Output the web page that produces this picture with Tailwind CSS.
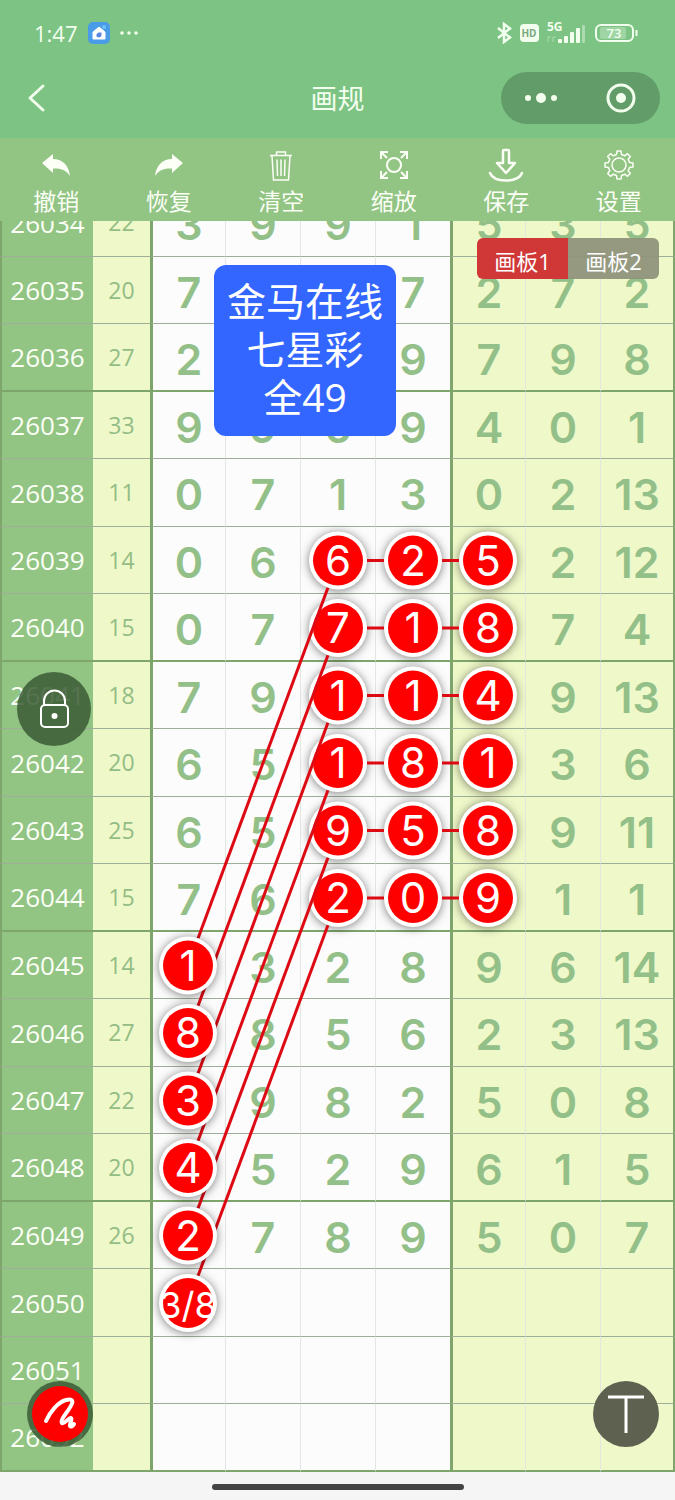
<!DOCTYPE html>
<html lang="zh-CN">
<head>
    <meta charset="UTF-8">
    <meta name="viewport" content="width=device-width, initial-scale=1.0">
    <title>画规</title>
    <script src="https://cdn.jsdelivr.net/npm/@tailwindcss/browser@4"></script>
</head>
<body class="min-h-screen bg-[#f5f5f5] font-['Open_Sans','Noto_Sans_CJK_SC',sans-serif]">
    <header class="bg-[#7cc384] text-[#f3ffee] pb-2">
        <!-- Status bar -->
        <div class="h-[66px] flex items-center justify-between pl-[34px] pr-[37px]">
            <div class="flex items-center gap-2.5">
                <span class="text-[22px] leading-none font-medium">1:47</span>
                <svg class="w-[22px] h-[22px]" viewBox="0 0 22 22">
                    <rect width="22" height="22" rx="5" fill="#4a9be8"/>
                    <path d="M5 10 L11 5 L17 10 V17 H5 Z" fill="#fff" stroke="#fff" stroke-width="1" stroke-linejoin="round"/>
                    <path d="M8.500 14.500 a3 3 0 0 1 3-4 h2 v2 a3 3 0 0 1-3 3z" fill="#5a86e0"/>
                    <circle cx="16" cy="5" r="2" fill="#6ec0f5"/>
                </svg>
                <svg class="w-[18px] h-1" viewBox="0 0 18 4" fill="currentColor">
                    <circle cx="2" cy="2" r="1.800"/><circle cx="9" cy="2" r="1.800"/><circle cx="16" cy="2" r="1.800"/>
                </svg>
            </div>
            <div class="flex items-center gap-2">
                <svg class="w-4 h-[22px]" viewBox="0 0 16 22" fill="none" stroke="currentColor" stroke-width="2.500">
                    <path d="M2 6 L14 15.500 L8 20 V2 L14 6.500 L2 16"/>
                </svg>
                <svg class="w-[19px] h-[18px]" viewBox="0 0 19 18">
                    <rect width="19" height="18" rx="4" fill="#f3ffee"/>
                    <text x="9" y="13" text-anchor="middle" font-size="10" font-weight="700" fill="#7ca881">HD</text>
                </svg>
                <svg class="w-[40px] h-[22px] overflow-visible" viewBox="0 0 40 22" fill="currentColor">
                    <text x="0" y="9" font-size="12" font-weight="700">5G</text>
                    <path d="M1 20 v-5 h3 M6 20 v-5 h3" fill="none" stroke="currentColor" opacity=".4"/>
                    <rect x="11" y="17" width="4" height="4" rx="1"/>
                    <rect x="17" y="14" width="4" height="7" rx="1"/>
                    <rect x="23" y="10" width="4" height="11" rx="1"/>
                    <rect x="29" y="6" width="4" height="15" rx="1"/>
                    <rect x="35" y="3" width="3" height="18" rx="1" opacity=".4"/>
                </svg>
                <svg class="w-[43px] h-[18px]" viewBox="0 0 43 18" fill="none" stroke="currentColor" stroke-width="2">
                    <rect x="5" y="3" width="26" height="12" rx="2" fill="currentColor" stroke="none" opacity=".3"/>
                    <rect x="1" y="1" width="37" height="16" rx="5"/>
                    <path d="M41.500 6 v6"/>
                    <text x="19" y="14" text-anchor="middle" font-size="13" font-weight="600" fill="currentColor" stroke="none">73</text>
                </svg>
            </div>
        </div>
        <!-- Title bar -->
        <div class="h-16 grid grid-cols-3 items-center px-[15px]">
            <button aria-label="返回" class="w-6 h-8 ml-2">
                <svg class="w-6 h-8" viewBox="0 0 24 32" fill="none" stroke="currentColor" stroke-width="3" stroke-linecap="round" stroke-linejoin="round">
                    <path d="M20 4 L7 16 L20 28"/>
                </svg>
            </button>
            <h1 class="text-center text-[27px] leading-none">画规</h1>
            <div class="justify-self-end w-[159px] h-[52px] rounded-full bg-[#629d69] flex items-center justify-between px-6">
                <button aria-label="更多">
                    <svg class="w-8 h-3" viewBox="0 0 32 12" fill="currentColor">
                        <circle cx="3" cy="6" r="3"/><circle cx="16" cy="6" r="5"/><circle cx="29" cy="6" r="3"/>
                    </svg>
                </button>
                <button aria-label="关闭">
                    <svg class="w-[30px] h-[30px]" viewBox="0 0 30 30">
                        <circle cx="15" cy="15" r="13" fill="none" stroke="currentColor" stroke-width="3"/>
                        <circle cx="15" cy="15" r="5" fill="currentColor"/>
                    </svg>
                </button>
            </div>
        </div>
    </header>

    <nav class="relative z-10 h-[83px] grid grid-cols-6 bg-[#92c484] text-[#fbfff5] text-[23px] leading-none">
        <button class="flex flex-col items-center gap-2 pt-2">
            <svg class="w-9 h-9" viewBox="0 0 36 36" fill="currentColor">
                <path d="M4 17 L15 8 V13 C25 13 31 20 32 30 C28 24 23 22 15 22.500 V27 Z"/>
            </svg>
            撤销
        </button>
        <button class="flex flex-col items-center gap-2 pt-2">
            <svg class="w-9 h-9" viewBox="0 0 36 36" fill="currentColor">
                <path d="M32 17 L21 8 V13 C11 13 5 20 4 30 C8 24 13 22 21 22.500 V27 Z"/>
            </svg>
            恢复
        </button>
        <button class="flex flex-col items-center gap-2 pt-2">
            <svg class="w-9 h-9" viewBox="0 0 36 36" fill="none" stroke="currentColor" stroke-width="1.500">
                <path d="M7 9.500 H29 M13.500 9 V6 H22.500 V9 M9 10 L10.500 34 H25.500 L27 10 M14 13.500 L14.500 30 M18 13.500 V30 M22 13.500 L21.500 30"/>
            </svg>
            清空
        </button>
        <button class="flex flex-col items-center gap-2 pt-2">
            <svg class="w-9 h-9" viewBox="0 0 36 36" fill="none" stroke="currentColor" stroke-width="2">
                <circle cx="18" cy="19" r="7"/>
                <path d="M5 13 V6 H12 M5 6 L11 12 M24 6 H31 V13 M31 6 L25 12 M5 25 V32 H12 M5 32 L11 26 M24 32 H31 V25 M31 32 L25 26"/>
            </svg>
            缩放
        </button>
        <button class="flex flex-col items-center gap-2 pt-2">
            <svg class="w-9 h-9" viewBox="0 0 36 36" fill="none" stroke="currentColor" stroke-width="2.500" stroke-linejoin="round" stroke-linecap="round">
                <path d="M15 5 Q15 4 16 4 H20 Q21 4 21 5 V17 H27 L18 27 L9 17 H15 Z"/>
                <path d="M2 27 C4 32 9 34.500 18 34.500 C27 34.500 32 32 34 27"/>
            </svg>
            保存
        </button>
        <button class="flex flex-col items-center gap-2 pt-2">
            <svg class="w-9 h-9" viewBox="0 0 36 36" fill="none" stroke="currentColor" stroke-width="1.500" stroke-linejoin="round">
                <circle cx="18" cy="19" r="7"/>
                <path d="M15.500 8.500 L16 5 H20 L20.500 8.500 L23.700 9.800 L26.500 7.700 L29.300 10.500 L27.200 13.300 L28.500 16.500 L32 17 V21 L28.500 21.500 L27.200 24.700 L29.300 27.500 L26.500 30.300 L23.700 28.200 L20.500 29.500 L20 33 H16 L15.500 29.500 L12.300 28.200 L9.500 30.300 L6.700 27.500 L8.800 24.700 L7.500 21.500 L4 21 V17 L7.500 16.500 L8.800 13.300 L6.700 10.500 L9.500 7.700 L12.300 9.800 Z"/>
            </svg>
            设置
        </button>
    </nav>

    <main class="relative overflow-hidden">
        <!-- Scrolled chart: the first row sits partly under the toolbar -->
        <div class="relative -mt-8">
            <table class="w-full table-fixed border-separate border-spacing-0 text-center leading-none">
                <colgroup>
                    <col class="w-[93px]">
                    <col class="w-[57px]">
                    <col span="7">
                </colgroup>
                <tbody id="rows"></tbody>
            </table>
            <svg id="marks" class="absolute inset-0 w-full h-full pointer-events-none font-['Inter',sans-serif]" viewBox="0 0 675 1283"></svg>
        </div>

        <div class="absolute left-[214px] top-11 w-[182px] h-[171px] rounded-xl bg-[#3366ff] text-white text-[39px] leading-[48px] text-center pt-3">
            金马在线<br>七星彩<br>全49
        </div>

        <div class="absolute right-4 top-[17px] h-[41px] w-[182px] grid grid-cols-2 rounded-md overflow-hidden text-white text-[22px] leading-none">
            <button class="bg-[#d03838] pt-1">画板1</button>
            <button class="bg-[#8f947b]/95 pt-1">画板2</button>
        </div>

        <button aria-label="锁定" class="absolute left-[17px] top-[451px] size-[74px] rounded-full bg-[#3b5a35]/85 text-white flex items-center justify-center">
            <svg class="w-8 h-10" viewBox="0 0 32 40" fill="none" stroke="currentColor" stroke-width="2">
                <rect x="3" y="16" width="27" height="22" rx="4"/>
                <path d="M6 16 V12 a10.500 10.500 0 0 1 21 0 V16"/>
                <circle cx="16.500" cy="27" r="3" fill="currentColor" stroke="none"/>
            </svg>
        </button>

        <button aria-label="画笔" class="absolute left-[27px] bottom-[25px] size-[66px] rounded-full bg-[#3b5a35]/85 text-white flex items-center justify-center">
            <svg class="size-14" viewBox="0 0 56 56" fill="none" stroke="currentColor" stroke-width="4" stroke-linecap="round" stroke-linejoin="round">
                <circle cx="28" cy="28" r="28" fill="#ff0000" stroke="none"/>
                <path d="M14 35 C18 26 26 16 34 14 C43 12 41 17 37 23 C33 29 28 35 30 37 C32 39 36 32 39 32 C41 33 37 38 38 40 C39 41 41 40 42 38"/>
            </svg>
        </button>

        <button aria-label="文字" class="absolute right-4 bottom-[25px] size-[66px] rounded-full bg-[#5e6150] text-white flex items-center justify-center">
            <svg class="size-[38px]" viewBox="0 0 38 38" fill="none" stroke="currentColor" stroke-width="3">
                <path d="M1 2 H37 M19 2 V38"/>
            </svg>
        </button>
    </main>

    <footer class="h-7 flex items-center justify-center">
        <div class="w-[252px] h-[6px] mt-0.5 rounded-full bg-[#444]"></div>
    </footer>

    <script>
        // issue, sum, then the seven drawn numbers; null where a ball or the note stands instead
        const draws = [
            [26034, 22, 3, 9, 9, 1, 5, 3, 5],
            [26035, 20, 7, null, null, 7, 2, 7, 2],
            [26036, 27, 2, null, null, 9, 7, 9, 8],
            [26037, 33, 9, 9, 6, 9, 4, 0, 1],
            [26038, 11, 0, 7, 1, 3, 0, 2, 13],
            [26039, 14, 0, 6, null, null, null, 2, 12],
            [26040, 15, 0, 7, null, null, null, 7, 4],
            [26041, 18, 7, 9, null, null, null, 9, 13],
            [26042, 20, 6, 5, null, null, null, 3, 6],
            [26043, 25, 6, 5, null, null, null, 9, 11],
            [26044, 15, 7, 6, null, null, null, 1, 1],
            [26045, 14, null, 3, 2, 8, 9, 6, 14],
            [26046, 27, null, 8, 5, 6, 2, 3, 13],
            [26047, 22, null, 9, 8, 2, 5, 0, 8],
            [26048, 20, null, 5, 2, 9, 6, 1, 5],
            [26049, 26, null, 7, 8, 9, 5, 0, 7],
            [26050], [26051], [26052],
        ];

        // Balls in the three middle columns, and the ones they lead to
        const sources = ['625', '718', '114', '181', '958', '209'];
        const results = ['1', '8', '3', '4', '2', '3/8'];

        // Table rows, with a heavy rule after every fourth one
        document.getElementById('rows').innerHTML = draws.map((draw, i) => {
            const rule = i % 4 === 2 ? 'border-b-2 border-b-[#7da56c]' : 'border-b border-b-[#9fae98]';
            const height = i % 2 === 0 ? 'h-[68px]' : 'h-[67px]';
            let html = `<th class="${rule} ${height} p-0 border-l-2 border-l-[#7da56c] bg-[#92c484] text-[26px] font-normal text-[#fbfff5]">${draw[0]}</th>`;
            html += `<td class="${rule} p-0 bg-[#eff8c9] text-[23px] text-[#93bd84]">${draw[1] ?? ''}</td>`;
            for (let c = 0; c < 7; c++) {
                const side = c % 4 === 0 ? 'border-l-3 border-l-[#7da56c]' : 'border-l border-l-[#e4e6e0]';
                const end = c === 6 ? 'border-r-2 border-r-[#7da56c]' : '';
                const bg = c < 4 ? 'bg-[#fcfcfc]' : 'bg-[#eff8c9]';
                html += `<td class="${rule} ${side} ${end} ${bg} p-0 pt-1 font-['Inter',sans-serif] text-[43px] font-semibold text-[#93c088]">${draw[c + 2] ?? ''}</td>`;
            }
            return `<tr>${html}</tr>`;
        }).join('');

        // Drawing layer
        const R = 29;
        const cx = col => 188 + col * 75;
        const cy = row => 34 + row * 67.5;

        function ball(col, row, label) {
            const x = cx(col), y = cy(row);
            return `<g class="drop-shadow-[0_1px_5px_rgba(0,0,0,0.5)]"><circle cx="${x}" cy="${y}" r="${R}" fill="#fff"/></g>
                <circle cx="${x}" cy="${y}" r="25" fill="#ff0000"/>
                <text x="${x}" y="${y + 15}" text-anchor="middle" font-size="${label.length > 1 ? 36 : 42}" fill="#fff" ${label.length > 1 ? 'clip-path="url(#ballClip)"' : ''}>${label}</text>`;
        }

        // Line between two balls, from edge to edge
        function link(c1, r1, c2, r2) {
            const dx = cx(c2) - cx(c1), dy = cy(r2) - cy(r1);
            const len = Math.hypot(dx, dy);
            const ux = dx / len * R, uy = dy / len * R;
            return `<line x1="${cx(c1) + ux}" y1="${cy(r1) + uy}" x2="${cx(c2) - ux}" y2="${cy(r2) - uy}" stroke="#dd0a14" stroke-width="3"/>`;
        }

        let source = '', links = '', result = '';
        for (let i = 0; i < 6; i++) {
            const row = i + 5;
            for (let c = 0; c < 3; c++) source += ball(c + 2, row, sources[i][c]);
            links += link(2, row, 3, row) + link(3, row, 4, row) + link(2, row, 0, row + 6);
            result += ball(0, row + 6, results[i]);
        }
        document.getElementById('marks').innerHTML =
            `<clipPath id="ballClip"><circle cx="${cx(0)}" cy="${cy(16)}" r="27"/></clipPath>` + source + links + result;
    </script>
</body>
</html>
